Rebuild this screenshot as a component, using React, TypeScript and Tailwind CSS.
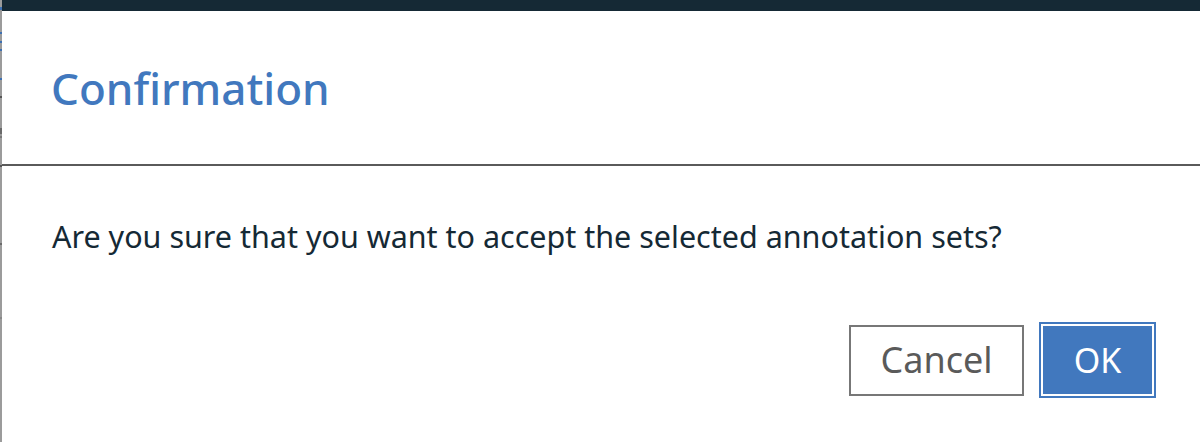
import React from 'react'

const marks: { h: number; c: string }[] = [
  { h: 7, c: 'bg-[#9b9b9b]' },
  { h: 3, c: 'bg-[#3d70b2]' },
  { h: 22, c: 'bg-[#9b9b9b]' },
  { h: 2, c: 'bg-[#3d70b2]' },
  { h: 7, c: 'bg-[#9b9b9b]' },
  { h: 2, c: 'bg-[#3d70b2]' },
  { h: 6, c: 'bg-[#9b9b9b]' },
  { h: 2, c: 'bg-[#3d70b2]' },
  { h: 27, c: 'bg-[#9b9b9b]' },
  { h: 2, c: 'bg-[#3d70b2]' },
  { h: 16, c: 'bg-[#9b9b9b]' },
  { h: 2, c: 'bg-[#555555]' },
  { h: 30, c: 'bg-[#9b9b9b]' },
  { h: 6, c: 'bg-[#6a6a6a]' },
  { h: 2, c: 'bg-[#9b9b9b]' },
  { h: 2, c: 'bg-[#7a7a7a]' },
  { h: 27, c: 'bg-[#9b9b9b]' },
  { h: 2, c: 'bg-[#555555]' },
  { h: 76, c: 'bg-[#9b9b9b]' },
  { h: 2, c: 'bg-[#6a6a6a]' },
  { h: 72, c: 'bg-[#9b9b9b]' },
  { h: 2, c: 'bg-[#888888]' },
]

function EdgeStrip() {
  return (
    <div className="flex w-[2px] shrink-0 flex-col bg-[#9b9b9b]">
      {marks.map((m, i) => (
        <div key={i} className={m.c} style={{ height: m.h }} />
      ))}
    </div>
  )
}

export default function App() {
  return (
    <div
      className="flex h-[442px] w-[1200px] overflow-hidden bg-white"
      style={{ fontFamily: '"Noto Sans", "Open Sans", sans-serif' }}
    >
      <EdgeStrip />
      <div className="flex flex-1 flex-col">
        <div className="h-[11px] bg-[#152935]" />
        <div className="flex h-[153px] items-center pl-[49px]">
          <h1 className="text-[44px] font-medium leading-none text-[#4178be]">Confirmation</h1>
        </div>
        <div className="h-[2px] bg-[#5a5a5a]" />
        <div className="flex flex-1 flex-col pr-[44px]">
          <p className="pl-[50px] pt-[50px] text-[30.5px] leading-[40px] text-[#152935]">
            Are you sure that you want to accept the selected annotation sets?
          </p>
          <div className="mt-[66px] flex items-center justify-end gap-[15px]">
            <button className="h-[71px] w-[175px] border-2 border-[#777777] bg-white text-[36px] text-[#5a5a5a]">
              Cancel
            </button>
            <button className="h-[76px] w-[117px] border-2 border-[#4178be] bg-[#4178be] text-[34px] text-white shadow-[inset_0_0_0_2px_#ffffff]">
              OK
            </button>
          </div>
        </div>
      </div>
    </div>
  )
}
